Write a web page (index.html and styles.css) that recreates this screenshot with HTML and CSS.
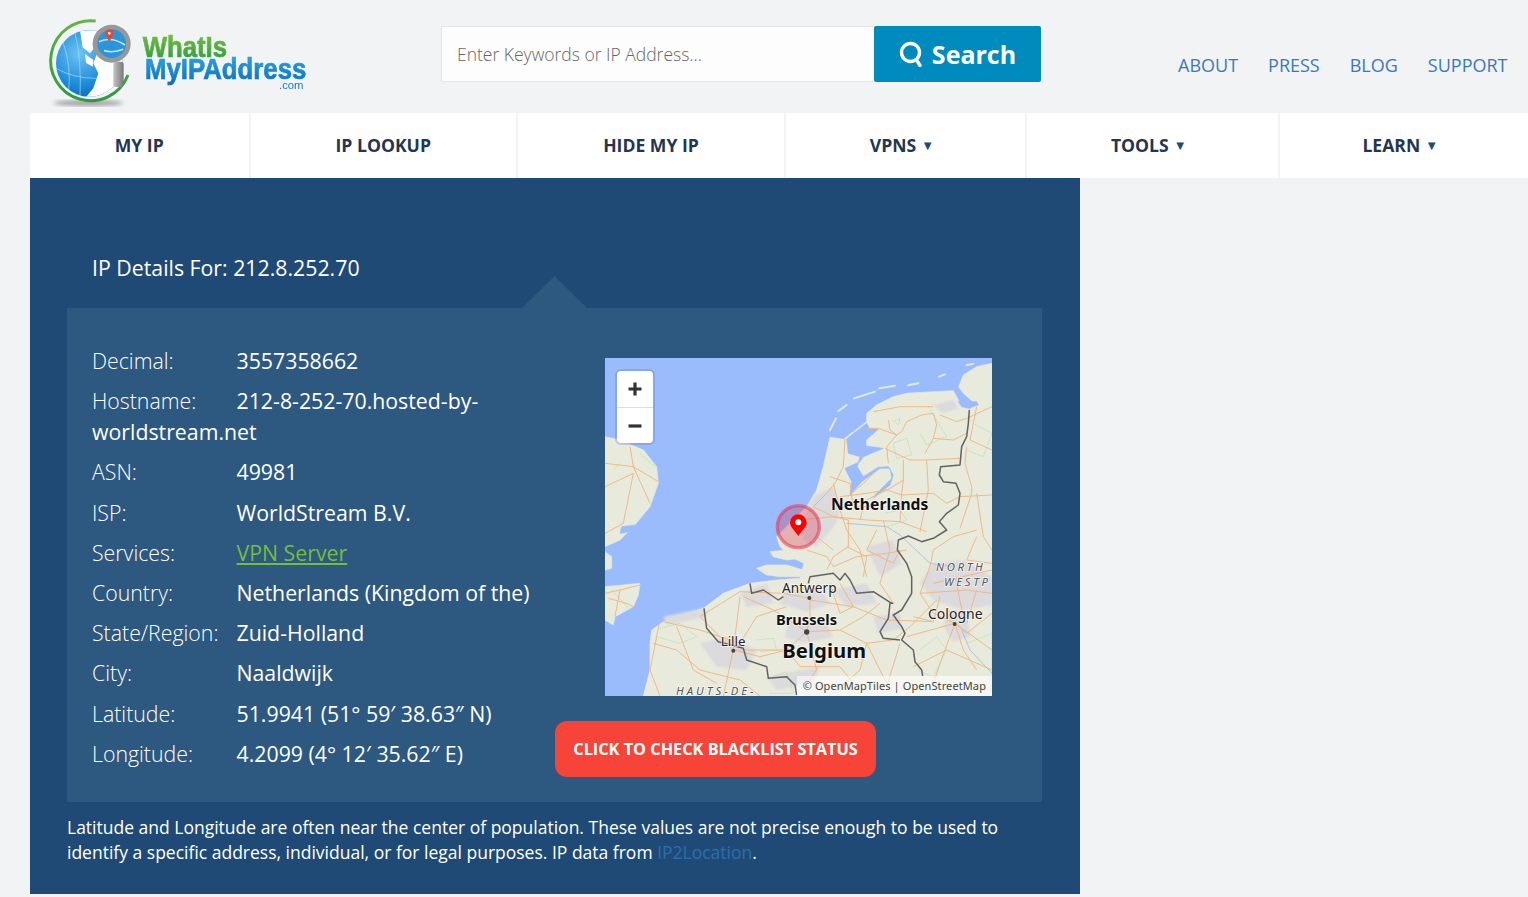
FILE: index.html
```html
<!DOCTYPE html>
<html lang="en">
<head>
  <meta charset="UTF-8">
  <meta name="viewport" content="width=device-width, initial-scale=1.0">
  <title>What Is My IP Address</title>
  <link rel="stylesheet" href="styles.css">
</head>
<body>
  <header class="topBar">
    <a class="logo" href="#">
      <svg width="300" height="105" viewBox="0 0 900 315">
        <defs>
          <radialGradient id="globeFill" cx="0.35" cy="0.35" r="0.8">
            <stop offset="0" stop-color="#6cc4f2"/>
            <stop offset="0.6" stop-color="#1c8ad8"/>
            <stop offset="1" stop-color="#0b5cab"/>
          </radialGradient>
          <linearGradient id="ringFill" x1="0" y1="0" x2="0" y2="1">
            <stop offset="0" stop-color="#63b544"/>
            <stop offset="1" stop-color="#2f9a3b"/>
          </linearGradient>
          <linearGradient id="whatFill" x1="0" y1="0" x2="0" y2="1">
            <stop offset="0" stop-color="#7cc242"/>
            <stop offset="1" stop-color="#2c9a3e"/>
          </linearGradient>
          <linearGradient id="myFill" x1="0" y1="0" x2="0" y2="1">
            <stop offset="0" stop-color="#2fa6e6"/>
            <stop offset="1" stop-color="#0a6fc0"/>
          </linearGradient>
          <linearGradient id="handleFill" x1="0" y1="0" x2="1" y2="0">
            <stop offset="0" stop-color="#c4c4c4"/>
            <stop offset="1" stop-color="#777"/>
          </linearGradient>
          <clipPath id="globeClip"><circle cx="178" cy="160" r="100"/></clipPath>
          <filter id="soften"><feGaussianBlur stdDeviation="6"/></filter>
          <filter id="logoSoft"><feGaussianBlur stdDeviation="0.8"/></filter>
          <filter id="tileSoft"><feGaussianBlur stdDeviation="1.2"/></filter>
          <filter id="urbanSoft"><feGaussianBlur stdDeviation="3"/></filter>
        </defs>
        <ellipse cx="175" cy="279" rx="105" ry="8" fill="#9a9a9a" filter="url(#soften)"/>
        <g filter="url(#logoSoft)">
          <path d="M197 33 A120 120 0 1 0 294 195" fill="none" stroke="url(#ringFill)" stroke-width="9"/>
          <circle cx="178" cy="160" r="100" fill="url(#globeFill)"/>
          <g clip-path="url(#globeClip)">
            <path d="M205 120 L285 130 L285 265 L165 265 L190 235 L205 190 L190 160 Z" fill="#fff"/>
            <path d="M150 62 L200 60 L205 100 L180 130 L158 112 Z M165 132 L190 150 L188 170 L168 158 Z" fill="#fff"/>
            <path d="M100 100 Q125 170 115 250 M135 70 Q155 150 150 258 M78 175 Q130 205 200 205" fill="none" stroke="#a9dcf7" stroke-width="2"/>
          </g>
          <circle cx="245" cy="101" r="45" fill="#2b95d8"/>
          <path d="M207 95 Q245 78 285 105 M222 122 Q250 130 280 118" fill="none" stroke="#bfe6fa" stroke-width="5"/>
          <circle cx="245" cy="101" r="50" fill="none" stroke="#989898" stroke-width="14"/>
          <rect x="250" y="155" width="31" height="76" rx="8" fill="url(#handleFill)"/>
          <path d="M238 96 C229 80 226 76 226 70 A12 12 0 0 1 250 70 C250 76 247 80 238 96 Z" fill="#e2483c"/>
          <circle cx="238" cy="70" r="4" fill="#fff"/>
          <text x="338" y="140" class="logoWord" font-size="86" fill="url(#whatFill)" stroke="url(#whatFill)" stroke-width="2" textLength="253" lengthAdjust="spacingAndGlyphs">WhatIs</text>
          <text x="345" y="207" class="logoWord" font-size="86" fill="url(#myFill)" stroke="url(#myFill)" stroke-width="2" textLength="484" lengthAdjust="spacingAndGlyphs">MyIPAddress</text>
          <text x="747" y="237" class="logoCom" font-size="34" fill="#1580cc">.com</text>
        </g>
      </svg>
    </a>
    <form class="searchForm" onsubmit="return false">
      <input class="searchInput" type="text" placeholder="Enter Keywords or IP Address...">
      <button class="searchButton" type="submit">
        <svg width="24" height="26" viewBox="0 0 24 26" fill="none" stroke="#fff" stroke-width="3.4" stroke-linecap="round">
          <circle cx="11.5" cy="11.5" r="9"/>
          <path d="M17.5 19 L21 24.5"/>
        </svg>
        Search
      </button>
    </form>
    <nav class="topLinks">
      <a href="#">ABOUT</a>
      <a href="#">PRESS</a>
      <a href="#">BLOG</a>
      <a href="#">SUPPORT</a>
    </nav>
  </header>

  <nav class="mainNav">
    <a href="#">MY IP</a>
    <a href="#">IP LOOKUP</a>
    <a href="#">HIDE MY IP</a>
    <a href="#">VPNS <span class="caret">▼</span></a>
    <a href="#">TOOLS <span class="caret">▼</span></a>
    <a href="#">LEARN <span class="caret">▼</span></a>
  </nav>

  <main class="panel">
    <h1 class="panelTitle">IP Details For: 212.8.252.70</h1>
    <section class="detailBox">
      <div class="detailList">
        <p class="row"><span class="label">Decimal:</span>3557358662</p>
        <p class="row"><span class="label">Hostname:</span>212-8-252-70.hosted-by-worldstream.net</p>
        <p class="row"><span class="label">ASN:</span>49981</p>
        <p class="row"><span class="label">ISP:</span>WorldStream B.V.</p>
        <p class="row"><span class="label">Services:</span><a class="greenLink" href="#">VPN Server</a></p>
        <p class="row"><span class="label">Country:</span>Netherlands (Kingdom of the)</p>
        <p class="row"><span class="label">State/Region:</span>Zuid-Holland</p>
        <p class="row"><span class="label">City:</span>Naaldwijk</p>
        <p class="row"><span class="label">Latitude:</span>51.9941 (51° 59′ 38.63″ N)</p>
        <p class="row"><span class="label">Longitude:</span>4.2099 (4° 12′ 35.62″ E)</p>
      </div>
      <div class="mapColumn">
        <div class="map">
          <svg width="387" height="338" viewBox="15 24 1161 1014">
            <rect x="15" y="24" width="1161" height="1014" fill="#9bbcfc"/>
            <g filter="url(#tileSoft)">
              <g fill="#e8eadc" stroke="#e8eadc" stroke-width="2">
                <path d="M130 1038 L150 960 L150 880 L155 840 L190 815 L310 775 L370 730 L450 700 L530 690 L600 685 L612 640 L570 620 L540 590 L530 560 L570 520 L620 470 L650 420 L670 350 L690 262 L730 268 L800 215 L800 190 L830 165 L880 140 L920 130 L1000 125 L1060 122 L1078 155 L1110 178 L1125 160 L1090 130 L1076 110 L1090 75 L1130 50 L1176 40 L1176 1038 Z"/>
                <path d="M15 260 L60 270 L130 300 L170 350 L175 400 L150 470 L100 530 L60 570 L15 590 Z"/>
                <path d="M15 710 L120 700 L115 735 L100 770 L45 800 L40 825 L15 810 Z"/>
                <path d="M15 605 L35 620 L35 655 L15 660 Z"/>
                <path d="M470 655 L500 645 L560 645 L610 660 L605 680 L540 680 L500 675 Z"/>
                <path d="M510 605 L560 600 L600 612 L600 625 L560 630 L520 620 Z"/>
              </g>
              <g fill="#dbdadc" filter="url(#urbanSoft)">
                <path d="M640 440 L700 410 L725 470 L705 525 L650 590 L610 570 L610 510 Z"/>
                <path d="M1000 640 L1090 630 L1176 680 L1176 765 L1090 780 L1000 750 L960 700 Z"/>
                <path d="M1040 780 L1100 790 L1110 860 L1060 875 L1030 830 Z"/>
                <path d="M555 725 L660 715 L690 760 L620 785 L540 760 Z"/>
                <path d="M565 815 L680 820 L700 860 L610 880 L555 860 Z"/>
                <path d="M300 880 L390 860 L470 900 L440 960 L350 950 Z"/>
                <path d="M820 800 L900 790 L905 835 L835 850 Z"/>
                <path d="M1000 165 L1060 150 L1075 175 L1030 190 Z"/>
                <path d="M500 980 L660 950 L640 1000 L530 1020 Z"/>
                <path d="M800 590 L880 570 L905 640 L840 680 Z"/>
                <path d="M700 720 L800 700 L830 760 L740 770 Z"/>
                <path d="M420 730 L500 700 L520 760 L440 770 Z"/>
                <path d="M190 800 L310 775 L320 800 L200 825 Z"/>
              </g>
              <g fill="#9bbcfc" stroke="#9bbcfc" stroke-width="2">
                <path d="M740 267 L800 220 L808 235 L835 238 L798 270 L798 288 L850 295 L790 320 L780 335 L735 355 L755 395 L750 435 L785 395 L840 355 L870 355 L875 385 L825 435 L820 445 L870 405 L880 375 L865 350 L835 352 L790 380 L772 350 L780 320 L745 310 Z"/>
                <path d="M1075 155 L1130 155 L1135 165 L1105 175 L1085 170 Z"/>
                <path d="M65 530 L105 525 L90 545 L60 550 Z"/>
              </g>
              <g fill="none" stroke="#dcebc8" stroke-width="6" stroke-linecap="round">
                <path d="M690 240 L708 205"/>
                <path d="M715 183 L740 165"/>
                <path d="M762 145 L825 125"/>
                <path d="M838 115 L885 107"/>
                <path d="M925 106 L955 100"/>
                <path d="M1017 80 L1035 73"/>
                <path d="M1100 45 L1120 42"/>
              </g>
              <g fill="none" stroke="#a8e698" stroke-width="3" stroke-dasharray="3 3">
                <path d="M880 215 L900 205 L895 225 Z"/>
                <path d="M880 280 L920 265 L935 315 L890 325 Z"/>
                <path d="M985 170 L1040 260 L980 285 L960 250"/>
                <path d="M1120 220 L1176 250 L1150 320 L1100 300"/>
                <path d="M855 490 L900 480 L920 510 L860 530"/>
                <path d="M180 835 L240 820 L290 860 L240 880 L170 860"/>
                <path d="M470 870 L520 865 L530 900 L480 905"/>
                <path d="M520 980 L560 965 L580 1030 L510 1030"/>
                <path d="M960 900 L1010 860 L1040 900 L1000 980 L950 960"/>
                <path d="M1100 880 L1176 850 L1176 1020 L1110 1000"/>
                <path d="M40 360 L60 340 M120 310 L165 350 M35 720 L90 780"/>
              </g>
              <g fill="none" stroke="#f1b57f" stroke-width="2.8">
                <path d="M865 210 L870 240 L890 255 L860 290 L865 340"/>
                <path d="M800 235 L835 235 L890 255 L905 245 L920 215 L965 195 L1000 190 L1010 225 L1000 265 L975 310"/>
                <path d="M855 295 L930 330 L975 330 L1080 325"/>
                <path d="M1020 195 L1070 215 L1100 205 L1176 170"/>
                <path d="M1100 290 L1095 340 L1115 410 L1115 430 L1080 535"/>
                <path d="M1000 430 L1040 460 L1080 440 L1176 435"/>
                <path d="M735 265 L730 350 L705 400 L680 430 L640 470"/>
                <path d="M820 370 L790 400 L755 430 L745 440"/>
                <path d="M910 390 L870 415 L800 450"/>
                <path d="M600 510 L700 500 L800 510 L900 515 L980 545"/>
                <path d="M700 400 L720 480 L740 540 L780 600 L800 680"/>
                <path d="M640 470 L700 500 L745 510 L745 590 L700 620 L680 660"/>
                <path d="M850 510 L870 600 L840 700 L880 760"/>
                <path d="M620 600 L680 620 L700 650 L770 620 L860 610 L920 600"/>
                <path d="M630 745 L630 800 L620 845 L560 900 L400 900"/>
                <path d="M630 745 L550 730 L420 725 L300 800"/>
                <path d="M630 750 L760 770 L860 810 L1000 815"/>
                <path d="M620 845 L720 840 L800 880 L880 870"/>
                <path d="M620 845 L650 960 L620 1000"/>
                <path d="M420 740 L400 900 L370 1038"/>
                <path d="M190 815 L300 840 L420 880"/>
                <path d="M180 810 L150 960 L180 1038"/>
                <path d="M300 800 L400 900 L480 920 L560 900"/>
                <path d="M230 830 L280 960 L350 1000"/>
                <path d="M1065 820 L1000 790 L960 730 L990 650"/>
                <path d="M1065 820 L1100 850 L1176 790"/>
                <path d="M1065 820 L1020 940 L1000 1000"/>
                <path d="M1065 820 L1090 900 L1130 960"/>
                <path d="M1000 700 L1176 660"/>
                <path d="M960 730 L1100 720 L1176 730"/>
                <path d="M1130 430 L1150 560 L1176 600"/>
                <path d="M920 860 L1065 820"/>
                <path d="M1065 680 L1090 800"/>
                <path d="M690 700 L720 790 L760 770 M800 880 L860 1000 M900 880 L860 1010"/>
                <path d="M15 340 L100 350 L175 395"/>
                <path d="M100 350 L90 290"/>
                <path d="M15 410 L100 370 L70 520 L15 550"/>
                <path d="M100 350 L150 460"/>
                <path d="M15 730 L60 720 L120 705"/>
                <path d="M25 745 L80 760 L100 770"/>
                <path d="M60 720 L45 800"/>
                <path d="M690 380 L750 400 L760 470 L830 470"/>
                <path d="M720 440 L800 430 L860 420 L905 435 L1000 430"/>
                <path d="M780 510 L790 470"/>
                <path d="M900 515 L905 430 L910 390 L910 330"/>
                <path d="M980 330 L985 420 L975 470 L960 545"/>
                <path d="M830 540 L800 600 L880 640 L900 600"/>
                <path d="M740 590 L800 620 L790 680"/>
                <path d="M650 560 L700 600"/>
                <path d="M430 740 L520 780 L620 845"/>
                <path d="M420 880 L470 800 L560 770"/>
                <path d="M560 900 L600 950 L720 950 L760 1000"/>
                <path d="M720 840 L790 800 L840 760"/>
                <path d="M760 770 L720 700"/>
                <path d="M800 880 L780 960 L700 1030"/>
                <path d="M880 870 L930 830 L1010 750"/>
                <path d="M300 960 L420 990 L480 1038"/>
                <path d="M160 880 L230 900 L300 960"/>
                <path d="M1130 560 L1100 630 L1176 640"/>
                <path d="M990 650 L1000 600 L1060 560 L1130 540"/>
                <path d="M940 800 L1000 815 L1020 740"/>
                <path d="M1065 820 L1176 900"/>
                <path d="M940 950 L1040 900 L1176 960"/>
                <path d="M1130 720 L1100 820"/>
                <path d="M1130 170 L1110 270 L1176 300"/>
                <path d="M1000 265 L1060 270 L1100 250"/>
                <path d="M820 185 L900 170 L1000 170"/>
              </g>
              <g fill="none" stroke="#abb9d6" stroke-width="2.5">
                <path d="M740 520 L860 530 L900 555 L990 640 L1060 650"/>
                <path d="M1085 840 L1110 900 L1176 970"/>
                <path d="M760 240 L790 320"/>
              </g>
              <g fill="none" stroke="#626262" stroke-width="4.5" stroke-linejoin="round">
                <path d="M1108 180 L1105 220 L1100 260 L1085 290 L1080 345 L1022 350 L1018 375 L1030 395 L1068 400 L1080 430 L1075 465 L1040 490 L1018 515 L1040 540 L1000 565 L965 575 L925 558 L895 570 L892 600 L920 640 L935 680 L935 730 L905 780 L880 795 L905 830 L915 850 L905 870 L940 900 L945 935 L965 960 L968 978"/>
                <path d="M880 760 L870 760 L865 805 L840 845 L850 865 L900 870"/>
                <path d="M875 760 L820 725 L770 730 L750 690 L735 670 L720 690 L700 670 L630 680 L625 700"/>
                <path d="M450 700 L455 730 L490 720 L535 750 L550 740"/>
                <path d="M312 775 L320 835 L355 875 L430 895 L440 930 L500 950 L505 985 L560 980 L585 1005 L590 1035"/>
              </g>
            </g>
            <g fill="#444">
              <circle cx="628" cy="744" r="6"/>
              <circle cx="620" cy="846" r="8"/>
              <circle cx="1064" cy="822" r="6"/>
              <circle cx="400" cy="902" r="6"/>
            </g>
            <g class="mapLabels">
              <text x="693" y="480" font-size="47" font-weight="700" fill="#111">Netherlands</text>
              <text x="546" y="730" font-size="41" fill="#222">Antwerp</text>
              <text x="528" y="825" font-size="44" font-weight="700" fill="#111">Brussels</text>
              <text x="547" y="925" font-size="61" font-weight="700" fill="#111">Belgium</text>
              <text x="984" y="808" font-size="42" fill="#222">Cologne</text>
              <text x="362" y="888" font-size="40" fill="#222">Lille</text>
              <text x="1008" y="663" font-size="34" font-style="italic" letter-spacing="8" fill="#555">NORTH</text>
              <text x="1032" y="708" font-size="34" font-style="italic" letter-spacing="8" fill="#555">WESTP</text>
              <text x="228" y="1036" font-size="34" font-style="italic" letter-spacing="9" fill="#555">HAUTS-DE-</text>
            </g>
            <circle cx="595" cy="530" r="63" fill="#dc1e46" fill-opacity="0.28" stroke="#e8344f" stroke-opacity="0.55" stroke-width="10"/>
            <path d="M595 558 C582 538 570 530 570 518 A25 25 0 0 1 620 518 C620 530 608 538 595 558 Z" fill="#f00"/>
            <circle cx="595" cy="517" r="9" fill="#fff"/>
          </svg>
          <div class="zoomControl">
            <button class="zoomButton" type="button">
              <svg width="14" height="14" viewBox="0 0 14 14"><path d="M7 0.5 V13.5 M0.5 7 H13.5" stroke="#333" stroke-width="3.2"/></svg>
            </button>
            <button class="zoomButton" type="button">
              <svg width="14" height="14" viewBox="0 0 14 14"><path d="M0.5 7 H13.5" stroke="#333" stroke-width="3.2"/></svg>
            </button>
          </div>
          <div class="attribution">© OpenMapTiles | OpenStreetMap</div>
        </div>
        <a class="blacklistButton" href="#">CLICK TO CHECK BLACKLIST STATUS</a>
      </div>
    </section>
    <p class="panelNote">Latitude and Longitude are often near the center of population. These values are not precise enough to be used to identify a specific address, individual, or for legal purposes. IP data from <a class="blueLink" href="#">IP2Location</a>.</p>
  </main>
</body>
</html>
```

FILE: styles.css
```css
body {
  margin: 0;
  background-color: #f1f3f5;
  font-family: "Open Sans", Arial, sans-serif;
  color: #fff;
}

a {
  text-decoration: none;
}

p {
  margin: 0;
}

.topBar {
  display: flex;
  height: 113px;
  padding-left: 30px;
  box-sizing: border-box;
}

.logo {
  display: block;
  width: 300px;
  height: 105px;
  margin-top: 10px;
}

.logoWord {
  font-family: "Liberation Sans", Arial, sans-serif;
  font-weight: 700;
}

.logoCom {
  font-family: "Liberation Sans", Arial, sans-serif;
}

.searchForm {
  display: flex;
  margin: 26px 0 0 111px;
  height: 56px;
}

.searchInput {
  width: 433px;
  height: 56px;
  box-sizing: border-box;
  padding: 0 15px;
  border: 1px solid #e6e6e8;
  border-right: none;
  background-color: #fdfdfd;
  font-family: "Open Sans", Arial, sans-serif;
  font-size: 17.5px;
  font-weight: 300;
  outline: none;
}

.searchInput::placeholder {
  color: #666;
  opacity: 1;
}

.searchButton {
  display: flex;
  align-items: center;
  justify-content: center;
  gap: 9px;
  width: 167px;
  height: 56px;
  border: none;
  border-radius: 2px;
  background-color: #008bbf;
  color: #fff;
  font-family: "Open Sans", Arial, sans-serif;
  font-size: 25px;
  font-weight: 700;
  cursor: pointer;
}

.topLinks {
  display: flex;
  gap: 30px;
  margin: 53px 0 0 137px;
  font-size: 18px;
  font-weight: 500;
  line-height: 25px;
}

.topLinks a {
  color: #3a7ab8;
}

.mainNav {
  display: grid;
  grid-template-columns: 218.5px 265.5px 266px 239px 250.5px 1fr;
  gap: 2px;
  margin-left: 30px;
  height: 65px;
}

.mainNav a {
  display: flex;
  align-items: center;
  justify-content: center;
  gap: 5px;
  padding-bottom: 2px;
  background-color: #fff;
  color: #24364f;
  font-size: 17.6px;
  font-weight: 700;
}

.caret {
  padding-right: 7px;
  font-size: 13px;
  color: #1f4a75;
}

.panel {
  width: 1050px;
  height: 716px;
  margin-left: 30px;
  padding: 76px 38px 0 37px;
  box-sizing: border-box;
  background-color: #1f4a75;
}

.panelTitle {
  margin: 0 0 26px 25px;
  font-size: 21.3px;
  font-weight: 400;
  line-height: 28px;
}

.detailBox {
  position: relative;
  display: flex;
  height: 494px;
  padding: 37px 0 0 25px;
  box-sizing: border-box;
  background-color: #2d587f;
}

.detailBox::before {
  content: "";
  position: absolute;
  left: 455px;
  top: -32px;
  width: 65px;
  height: 32px;
  background-color: #2d587f;
  clip-path: polygon(50% 0, 100% 100%, 0 100%);
}

.detailList {
  width: 463px;
  flex-shrink: 0;
  font-size: 21.3px;
}

.row {
  line-height: 31px;
  margin-bottom: 9.2px;
}

.label {
  display: inline-block;
  width: 144.5px;
  font-weight: 300;
}

.greenLink {
  color: #77bc3f;
  text-decoration: underline;
}

.mapColumn {
  display: flex;
  flex-direction: column;
  align-items: flex-start;
  padding-top: 13px;
}

.map {
  position: relative;
  width: 387px;
  height: 338px;
  margin-left: 50px;
  overflow: hidden;
}

.map > svg {
  display: block;
}

.mapLabels text {
  font-family: "Noto Sans", "Open Sans", sans-serif;
  paint-order: stroke;
  stroke: rgba(255, 255, 255, 0.7);
  stroke-width: 5px;
}

.zoomControl {
  position: absolute;
  left: 12px;
  top: 13px;
  width: 36px;
  border-radius: 4px;
  background-color: #fff;
  box-shadow: 0 0 0 2px rgba(90, 120, 190, 0.3);
}

.zoomButton {
  display: flex;
  align-items: center;
  justify-content: center;
  width: 36px;
  height: 36px;
  padding: 0;
  border: none;
  background: none;
}

.zoomButton + .zoomButton {
  border-top: 1px solid #ddd;
}

.attribution {
  position: absolute;
  right: 0;
  bottom: 0;
  padding: 0 6px;
  background-color: rgba(255, 255, 255, 0.6);
  color: #444;
  font-family: "Noto Sans", "Open Sans", sans-serif;
  font-size: 11px;
  letter-spacing: 0.1px;
  line-height: 20px;
  white-space: nowrap;
}

.blacklistButton {
  display: block;
  width: 321px;
  height: 56px;
  margin-top: 25px;
  border-radius: 12px;
  background-color: #f74439;
  color: #fff;
  font-size: 16.3px;
  font-weight: 700;
  line-height: 56px;
  text-align: center;
}

.panelNote {
  margin-top: 13px;
  font-size: 17.5px;
  line-height: 25px;
}

.blueLink {
  color: #2d6eb0;
}
```
